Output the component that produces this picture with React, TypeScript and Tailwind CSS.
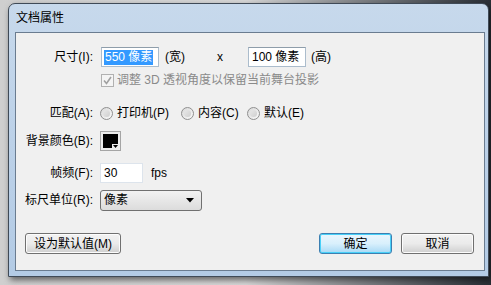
import React from 'react';

const font = { fontFamily: '"Liberation Sans", "Noto Sans CJK SC", sans-serif' };

function Label({ children }: { children: React.ReactNode }) {
  return <div className="w-[77px] shrink-0 text-right text-[12px] text-black">{children}</div>;
}

function TextBox({ children, w }: { children: React.ReactNode; w: string }) {
  return (
    <div
      className={`flex h-[20px] ${w} items-center border border-[#abbccc] border-t-[#8e9daa] bg-white px-[2px] text-[12px] text-black`}
    >
      {children}
    </div>
  );
}

function Radio({ label }: { label: string }) {
  return (
    <div className="flex items-center gap-[4px]">
      <span className="flex h-[13px] w-[13px] items-center justify-center rounded-full border border-[#8f8f8f] bg-gradient-to-br from-[#d9d9d9] to-[#fafafa]">
        <span className="h-[7px] w-[7px] rounded-full bg-gradient-to-br from-[#e8e8e8] to-[#cfcfcf]" />
      </span>
      <span className="text-[12px] text-black">{label}</span>
    </div>
  );
}

function Button({ children, primary, w }: { children: React.ReactNode; primary?: boolean; w: string }) {
  return (
    <div
      className={
        primary
          ? `flex h-[21px] ${w} items-center justify-center rounded-[3px] border border-[#3c7fb1] bg-gradient-to-b from-[#eaf6fd] via-[#d9f0fc] to-[#a7d9f5] text-[12px] text-black shadow-[inset_0_0_0_1px_#48d0f8]`
          : `flex h-[21px] ${w} items-center justify-center rounded-[3px] border border-[#707070] bg-gradient-to-b from-[#f2f2f2] via-[#ebebeb] to-[#cfcfcf] text-[12px] text-black shadow-[inset_0_0_0_1px_#fcfcfc]`
      }
    >
      {children}
    </div>
  );
}

export default function App() {
  return (
    <div className="h-[285px] w-[491px] overflow-hidden bg-gradient-to-r from-[#cfcfcf] via-[#d8d8d8] to-[#2a2f36]" style={font}>
      <div className="pl-[8px] pt-[3px]">
        {/* window frame */}
        <div className="flex h-[274px] w-[481px] flex-col rounded-t-[7px] border border-[#3f4a57] bg-gradient-to-b from-[#c7d9ec] via-[#bcd1e8] to-[#b3cbe5] pb-[5px] pl-[6px] pr-[3px] shadow-[2px_3px_6px_rgba(0,0,0,0.55)]">
          <div className="flex h-[28px] items-center pl-[1px] text-[12px] text-black">文档属性</div>

          {/* client */}
          <div className="flex flex-1 flex-col border border-[#6a7c90] bg-[#f0f0f0] pt-[14px]">
            <div className="flex h-[20px] items-center gap-[7px]">
              <Label>尺寸(I):</Label>
              <div className="ml-[1px] flex items-center text-[12px] text-black">
                <TextBox w="w-[58px]">
                  <span className="bg-[#3399ff] px-[1px] leading-[15px] text-white">550 像素</span>
                </TextBox>
                <span className="ml-[6px]">(宽)</span>
                <span className="ml-[32px]">x</span>
                <div className="ml-[25px]">
                  <TextBox w="w-[58px]">
                    <span className="px-[1px]">100 像素</span>
                  </TextBox>
                </div>
                <span className="ml-[5px]">(高)</span>
              </div>
            </div>

            <div className="mt-[5px] flex h-[16px] items-center pl-[85px]">
              <span className="flex h-[13px] w-[13px] items-center justify-center border border-[#b1b1b1] bg-[#f4f4f4]">
                <svg width="11" height="11" viewBox="0 0 11 11">
                  <path d="M2 5.5 L4.5 8.5 L9 2" fill="none" stroke="#a0a0a0" strokeWidth="1.6" />
                </svg>
              </span>
              <span className="ml-[3px] text-[12px] text-[#8a8a8a]">调整 3D 透视角度以保留当前舞台投影</span>
            </div>

            <div className="mt-[17px] flex h-[16px] items-center gap-[7px]">
              <Label>匹配(A):</Label>
              <div className="flex items-center">
                <div className="w-[81px]"><Radio label="打印机(P)" /></div>
                <div className="w-[66px]"><Radio label="内容(C)" /></div>
                <Radio label="默认(E)" />
              </div>
            </div>

            <div className="mt-[10px] flex h-[20px] items-center gap-[7px]">
              <Label>背景颜色(B):</Label>
              <div className="relative flex h-[20px] w-[21px] items-center justify-center border border-[#a5a5a5] bg-[#ececec]">
                <div className="h-[14px] w-[15px] bg-black" />
                <svg className="absolute bottom-[1px] right-[1px]" width="7" height="5" viewBox="0 0 7 5">
                  <rect width="7" height="5" fill="#ececec" />
                  <path d="M1 1 L6 1 L3.5 4 Z" fill="#000" />
                </svg>
              </div>
            </div>

            <div className="mt-[12px] flex h-[20px] items-center gap-[7px]">
              <Label>帧频(F):</Label>
              <div className="flex h-[20px] w-[43px] items-center border border-[#dde4ec] bg-white px-[3px] text-[12px] text-black">30</div>
              <span className="ml-[1px] text-[12px] text-black">fps</span>
            </div>

            <div className="mt-[7px] flex h-[20px] items-center gap-[7px]">
              <Label>标尺单位(R):</Label>
              <div className="flex h-[21px] w-[102px] items-center justify-between rounded-[3px] border border-[#707070] bg-gradient-to-b from-[#f2f2f2] to-[#dcdcdc] pl-[3px] pr-[7px] text-[12px] text-black">
                <span>像素</span>
                <svg width="8" height="5" viewBox="0 0 8 5">
                  <path d="M0 0 L8 0 L4 4.5 Z" fill="#000" />
                </svg>
              </div>
            </div>

            <div className="mt-[23px] flex items-center pl-[9px] pr-[10px]">
              <Button w="w-[96px]">设为默认值(M)</Button>
              <div className="flex-1" />
              <Button primary w="w-[73px]">确定</Button>
              <div className="w-[9px]" />
              <Button w="w-[73px]">取消</Button>
            </div>
          </div>
        </div>
      </div>
    </div>
  );
}
